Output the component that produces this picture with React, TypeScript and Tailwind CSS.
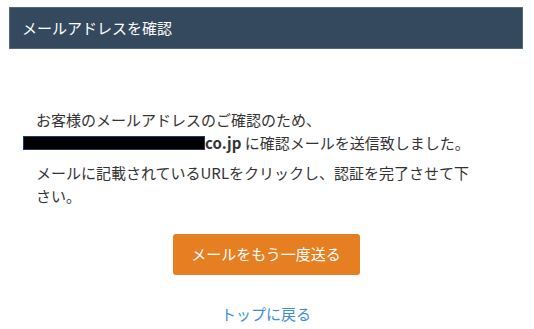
const font = {
  fontFamily: '"Noto Sans CJK JP", "Noto Sans", "Liberation Sans", sans-serif',
};

export default function App() {
  return (
    <div className="min-h-[329px] w-[534px] bg-white pt-[7px]" style={font}>
      <div className="ml-[9px] w-[514px]">
        {/* Title bar */}
        <div className="flex h-[42px] items-center border border-[#56677a] bg-[#34495e] pl-[12px] text-[15px] text-white">
          メールアドレスを確認
        </div>

        {/* Message */}
        <div className="pl-[27px] pr-[40px] pt-[59px] text-[15px] leading-[23px] text-[#333333]">
          <p>
            お客様のメールアドレスのご確認のため、
            <br />
            <span className="-ml-[13px] inline-block h-[14px] w-[182px] border border-[#1f3a6e] bg-black align-[-1px]" />
            <span className="font-bold">co.jp</span> に確認メールを送信致しました。
          </p>
          <p className="mt-[7px]">
            メールに記載されているURLをクリックし、認証を完了させて下さい。
          </p>
        </div>

        {/* Actions */}
        <div className="mt-[27px] flex flex-col items-center">
          <button className="h-[41px] w-[187px] rounded-[3px] bg-[#e67e22] text-[15px] text-white">
            メールをもう一度送る
          </button>
          <a className="mt-[27px] text-[15px] leading-[23px] text-[#3d8fd1]">
            トップに戻る
          </a>
        </div>
      </div>
    </div>
  );
}
